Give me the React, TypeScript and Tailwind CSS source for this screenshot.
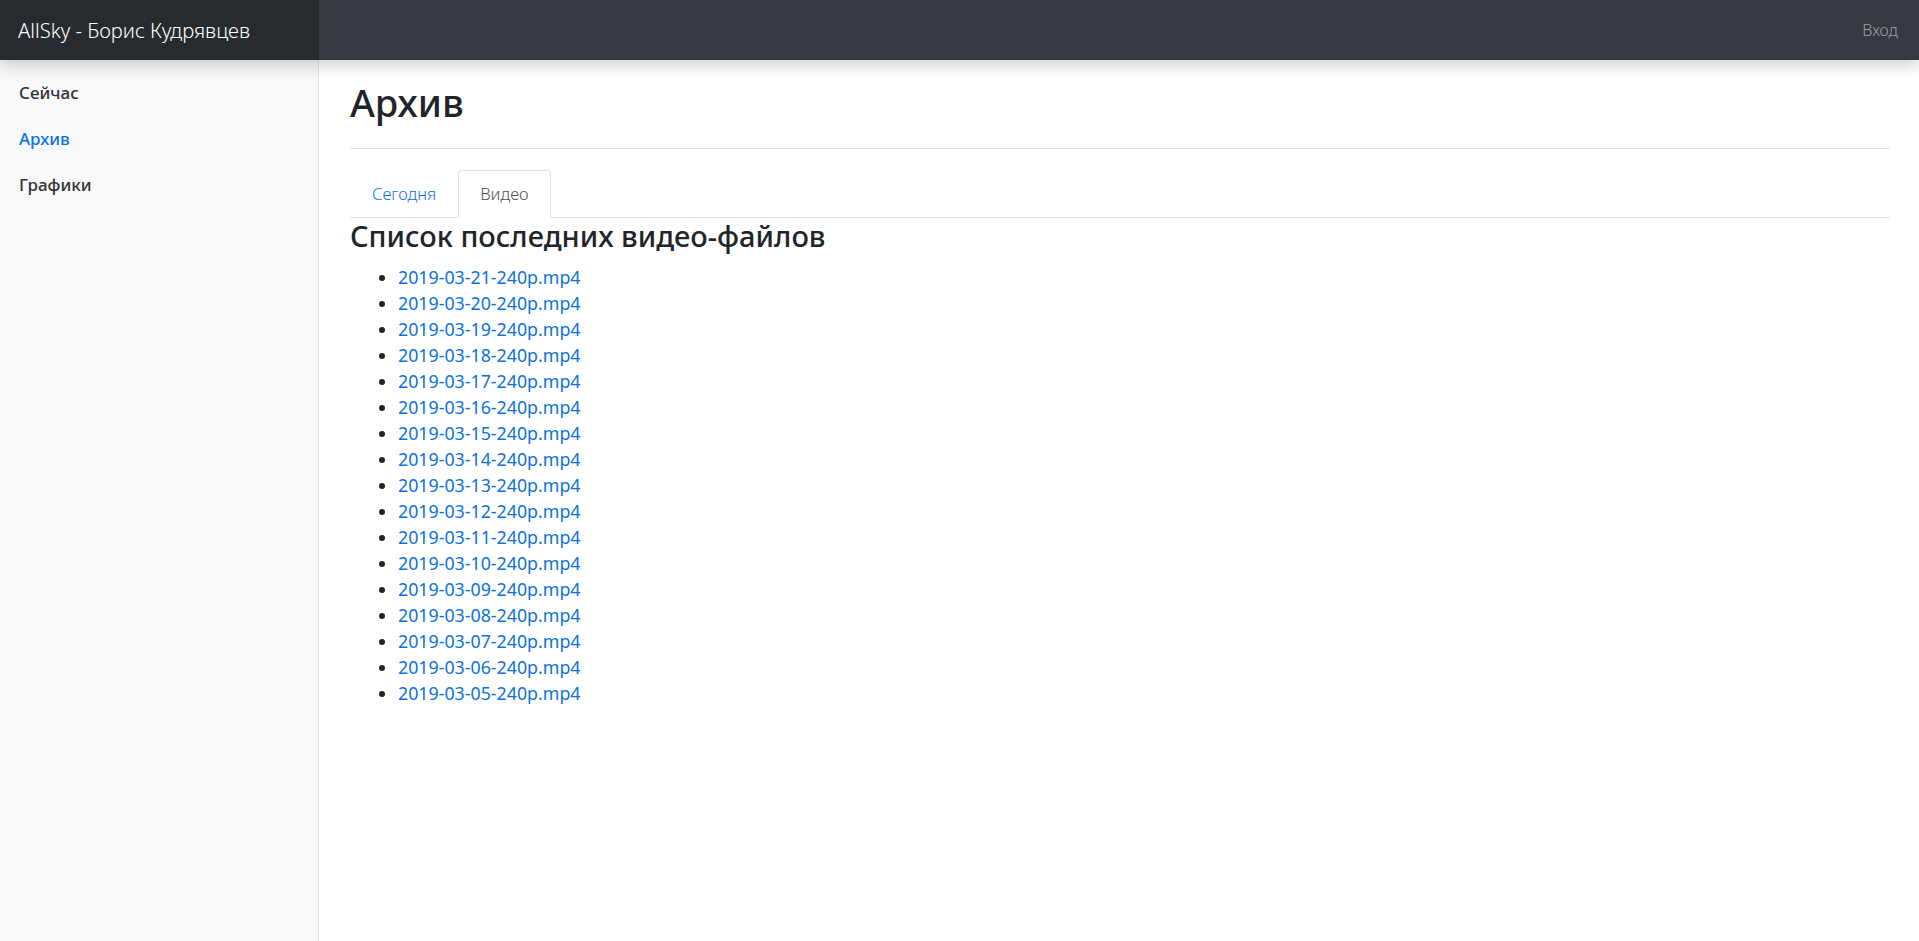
import React from 'react';

const videos = [
  '2019-03-21', '2019-03-20', '2019-03-19', '2019-03-18', '2019-03-17', '2019-03-16',
  '2019-03-15', '2019-03-14', '2019-03-13', '2019-03-12', '2019-03-11', '2019-03-10',
  '2019-03-09', '2019-03-08', '2019-03-07', '2019-03-06', '2019-03-05',
];

const App = () => {
  return (
    <div className="flex flex-col min-h-[941px] bg-white text-[#212529] font-['Noto_Sans',sans-serif]">
      {/* top navbar */}
      <header className="relative z-10 flex items-center h-[60px] bg-[#343a40] shadow-[0_6px_14px_rgba(0,0,0,0.18)]">
        <div className="flex items-center h-full w-[319px] pl-[18px] bg-[#272b30] text-white text-[20.2px] font-light">
          AllSky - Борис Кудрявцев
        </div>
        <div className="flex-1" />
        <a href="#" className="pr-[21px] text-[16px] font-light text-[#9a9da0]">Вход</a>
      </header>

      <div className="flex flex-1">
        {/* sidebar */}
        <nav className="w-[319px] bg-[#f8f9fa] border-r border-[#e3e4e6] pt-[10px]">
          <ul>
            <li><a href="#" className="flex items-center h-[46px] pl-[19px] text-[17px] font-medium text-[#333]">Сейчас</a></li>
            <li><a href="#" className="flex items-center h-[46px] pl-[19px] text-[17px] font-medium text-[#0b74e0]">Архив</a></li>
            <li><a href="#" className="flex items-center h-[46px] pl-[19px] text-[17px] font-medium text-[#333]">Графики</a></li>
          </ul>
        </nav>

        {/* main */}
        <main className="flex-1 pl-[31px] pr-[29px]">
          <div className="pt-[20px] pb-[23px] border-b border-[#dee2e6]">
            <h1 className="text-[38px] leading-[45px] font-medium">Архив</h1>
          </div>

          <div className="mt-[21px] flex border-b border-[#dee2e6]">
            <a href="#" className="flex items-center h-[48px] px-[21px] border border-transparent text-[16.5px] font-light text-[#0b72dc] -mb-px">
              Сегодня
            </a>
            <a href="#" className="flex items-center h-[48px] px-[21px] border border-[#dee2e6] border-b-white rounded-t-[4px] bg-white text-[16.5px] font-light text-[#495057] -mb-px">
              Видео
            </a>
          </div>

          <h3 className="text-[29px] leading-[34px] font-medium mt-[1px] mb-[11px]">Список последних видео-файлов</h3>
          <ul className="list-disc pl-[48px]">
            {videos.map((d) => (
              <li key={d} className="text-[17.8px] leading-[26px]">
                <a href="#" className="text-[#0b72dc]">{d}-240p.mp4</a>
              </li>
            ))}
          </ul>
        </main>
      </div>
    </div>
  );
};

export default App;
